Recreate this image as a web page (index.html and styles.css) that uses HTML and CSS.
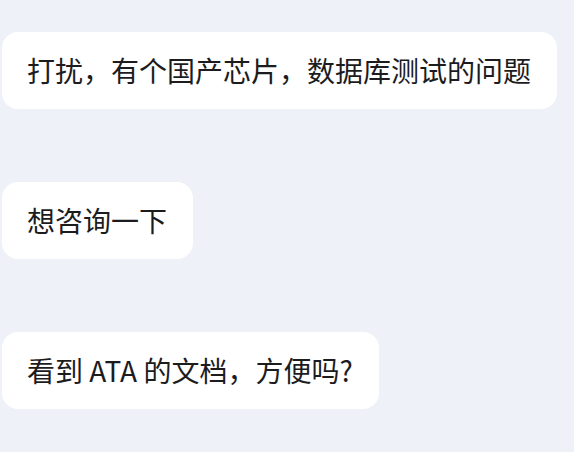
FILE: index.html
```html
<!DOCTYPE html>
<html lang="zh">
<head>
<meta charset="utf-8">
<link rel="stylesheet" href="styles.css">
</head>
<body>
<div class="chat">
  <div class="bubble">打扰，有个国产芯片，数据库测试的问题</div>
  <div class="bubble">想咨询一下</div>
  <div class="bubble">看到 ATA 的文档，方便吗?</div>
</div>
</body>
</html>
```
FILE: styles.css
```css
html, body {
  margin: 0;
  padding: 0;
  background: #eef1f8;
}
body {
  width: 574px;
  height: 452px;
  overflow: hidden;
  font-family: "Noto Sans CJK SC", "Noto Sans", sans-serif;
}
.chat {
  display: flex;
  flex-direction: column;
  align-items: flex-start;
  gap: 73px;
  padding: 32px 0 0 2px;
}
.bubble {
  background: #ffffff;
  border-radius: 16px;
  padding: 20px 26px 20px 25px;
  font-size: 28px;
  line-height: 37px;
  color: #1c1c1e;
  white-space: nowrap;
}
```
